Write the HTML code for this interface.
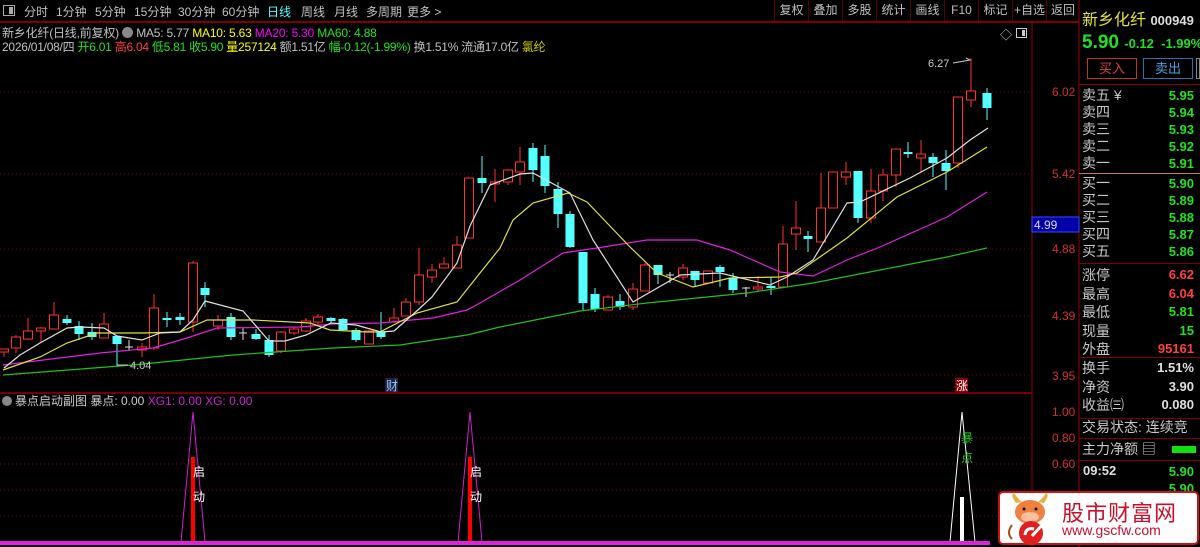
<!DOCTYPE html>
<html><head><meta charset="utf-8"><style>
*{margin:0;padding:0;box-sizing:border-box}
body{width:1200px;height:547px;background:#000;overflow:hidden;position:relative;font-family:"Liberation Sans","Noto Sans CJK SC",sans-serif;color:#c0c0c0}
.a{position:absolute;white-space:nowrap}
.tb{font-size:12px;top:3px;color:#c0c0c0;position:absolute;white-space:nowrap}
.rb{position:absolute;top:0;height:21px;font-size:12px;line-height:21px;text-align:center;color:#c0c0c0;border-left:1px solid #500}
.rp{position:absolute;left:1082px;font-size:14px;color:#c8c8c8;line-height:17px}
.rv{position:absolute;right:6px;font-size:13px;font-weight:bold;line-height:17px;text-align:right}
.g{color:#22e022}.r{color:#ff4040}.w{color:#e0e0e0}
.hl{position:absolute;left:1079px;width:121px;height:1px;background:#800000}
</style></head><body>
<!-- toolbar -->
<div class="a" style="left:3px;top:5px;width:12px;height:11px;border:1px solid #aaa"></div>
<div class="a" style="left:9px;top:7px;width:4px;height:7px;background:#aaa"></div>
<div class="tb" style="left:24px">分时</div>
<div class="tb" style="left:56px">1分钟</div>
<div class="tb" style="left:95px">5分钟</div>
<div class="tb" style="left:134px">15分钟</div>
<div class="tb" style="left:178px">30分钟</div>
<div class="tb" style="left:222px">60分钟</div>
<div class="tb" style="left:267px;color:#5ff">日线</div>
<div class="tb" style="left:301px">周线</div>
<div class="tb" style="left:334px">月线</div>
<div class="tb" style="left:366px">多周期</div>
<div class="tb" style="left:407px">更多 &gt;</div>
<div class="rb" style="left:774px;width:34px">复权</div>
<div class="rb" style="left:808px;width:34px">叠加</div>
<div class="rb" style="left:842px;width:34px">多股</div>
<div class="rb" style="left:876px;width:34px">统计</div>
<div class="rb" style="left:910px;width:34px">画线</div>
<div class="rb" style="left:944px;width:34px">F10</div>
<div class="rb" style="left:978px;width:34px">标记</div>
<div class="rb" style="left:1012px;width:34px">+自选</div>
<div class="rb" style="left:1046px;width:33px">返回</div>
<div class="a" style="left:0;top:21px;width:1079px;height:2px;background:#800000"></div>
<!-- info lines -->
<div class="a" style="left:2px;top:24px;font-size:12px;letter-spacing:-0.2px">新乡化纤(日线,前复权) <span style="display:inline-block;width:11px;height:11px;border-radius:6px;background:#888;vertical-align:-1px"></span> MA5: 5.77 <span style="color:#ff0">MA10: 5.63</span> <span style="color:#f0f">MA20: 5.30</span> <span class="g">MA60: 4.88</span></div>
<div class="a" style="left:2px;top:38px;font-size:12px;letter-spacing:-0.25px">2026/01/08/四 <span class="g">开6.01</span> <span class="r">高6.04</span> <span class="g">低5.81</span> <span class="g">收5.90</span> <span style="color:#ff0">量257124</span> 额1.51亿 <span class="g">幅-0.12(-1.99%)</span> 换1.51% 流通17.0亿 <span style="color:#cc0">氯纶</span></div>
<div class="a" style="left:1000px;top:26px;font-size:12px;color:#ccc">◇</div>
<div class="a" style="left:1016px;top:28px;width:11px;height:10px;border:1px solid #ccc"></div>
<div class="a" style="left:1022px;top:30px;width:3px;height:6px;background:#ccc"></div>

<svg class="a" style="left:0;top:0" width="1080" height="547" id="ch">
<g stroke="#800000" stroke-dasharray="1,3">
<line x1="0" y1="92" x2="1030" y2="92"/><line x1="0" y1="174" x2="1030" y2="174"/><line x1="0" y1="249" x2="1030" y2="249"/><line x1="0" y1="316" x2="1030" y2="316"/><line x1="0" y1="375" x2="1030" y2="375"/>
<line x1="0" y1="438" x2="1030" y2="438"/><line x1="0" y1="464" x2="1030" y2="464"/><line x1="0" y1="490" x2="1030" y2="490"/><line x1="0" y1="516" x2="1030" y2="516"/>
</g>
<line x1="0" y1="393" x2="1032" y2="393" stroke="#900" stroke-width="1.5"/>
<line x1="1032" y1="21" x2="1032" y2="547" stroke="#900"/>
<line x1="1079" y1="0" x2="1079" y2="547" stroke="#900"/>
<g fill="#d03030" font-size="12" font-family="Liberation Sans">
<text x="1052" y="96">6.02</text><text x="1052" y="178">5.42</text><text x="1052" y="253">4.88</text><text x="1052" y="320">4.39</text><text x="1052" y="380">3.95</text>
<text x="1052" y="416">1.00</text><text x="1052" y="442">0.80</text><text x="1052" y="468">0.60</text>
</g>
<rect x="1032" y="217" width="47" height="15" fill="#0000a8" stroke="#44f"/>
<text x="1034" y="229" fill="#ddd" font-size="12" font-family="Liberation Sans">4.99</text>
<g id="cd"></g>
<g fill="none" stroke-width="1.2">
<polyline stroke="#20c020" points="3,375 133,365 233,355 333,348 400,345 467,335 500,327 580,311 647,303 747,293 813,283 880,270 947,257 987,248"/>
<polyline stroke="#e020e0" points="3,365 100,353 153,348 187,338 217,328 300,327 333,324 380,323 433,318 467,310 480,303 520,280 563,253 597,248 647,240 697,240 730,250 780,272 813,276 847,260 880,247 947,217 987,192"/>
<polyline stroke="#e0e040" points="3,370 40,357 67,343 97,333 143,333 180,332 207,320 253,320 310,323 330,330 367,332 380,332 417,313 457,302 480,273 500,248 513,220 533,203 568,193 587,202 630,247 657,273 693,287 730,278 780,277 797,273 847,238 897,197 947,172 987,147"/>
<polyline stroke="#e0e0e0" points="4,368 20,355 40,343 67,328 80,327 104,328 117,336 142,340 160,333 180,332 193,320 205,301 243,311 269,341 285,341 306,335 331,323 356,325 381,332 394,331 419,309 432,297 457,263 470,226 490,185 520,174 533,173 570,193 593,240 633,302 680,275 720,273 770,285 787,277 813,260 847,203 860,202 910,178 947,158 970,140 988,128"/>
</g>
<line x1="117" y1="365" x2="128" y2="365" stroke="#ccc"/><text x="130" y="369" fill="#ccc" font-size="11" font-family="Liberation Sans">4.04</text>
<text x="928" y="67" fill="#ccc" font-size="11" font-family="Liberation Sans">6.27</text>
<polyline points="953,63 970,60 966,58" fill="none" stroke="#ccc"/>
<rect x="385" y="378" width="13" height="14" fill="#224"/><text x="386" y="390" fill="#8cf" font-size="12">财</text>
<rect x="955" y="378" width="13" height="14" fill="#800"/><text x="956" y="390" fill="#fff" font-size="12">涨</text>
<!-- sub chart -->
<polygon points="181,542 193,412 205,542" fill="none" stroke="#d020d0"/>
<polygon points="458,542 470,412 482,542" fill="none" stroke="#d020d0"/>
<polygon points="950,542 962,412 975,542" fill="none" stroke="#fff"/>
<rect x="191" y="457" width="4" height="85" fill="#f00"/>
<rect x="468" y="457" width="4" height="85" fill="#f00"/>
<rect x="960" y="497" width="4" height="45" fill="#fff"/>
<g font-size="12" fill="#fff"><text x="193" y="476">启</text><text x="193" y="501">动</text><text x="470" y="476">启</text><text x="470" y="501">动</text></g>
<g font-size="12" fill="#20c020"><text x="961" y="442">暴</text><text x="961" y="462">点</text></g>
<rect x="0" y="541" width="990" height="4" fill="#e020e0"/>
<circle cx="7" cy="401" r="5" fill="#888"/>
<text x="15" y="405" font-size="12" fill="#ccc">暴点启动副图 暴点: 0.00 <tspan fill="#d020d0">XG1: 0.00 XG: 0.00</tspan></text>
</svg>

<!-- right panel -->
<div class="a" style="left:1082px;top:6px;font-size:16px;color:#e0e040">新乡化纤 <span style="font-size:13px;color:#ddd;font-weight:bold">000949</span></div>
<div class="a" style="left:1082px;top:32px;font-size:19px;font-weight:bold;color:#22e022">5.90 <span style="font-size:13px">-0.12&nbsp;&nbsp;-1.99%</span></div>
<div class="a" style="left:1087px;top:58px;width:50px;height:21px;border:1px solid #c03030;color:#e04040;font-size:13px;text-align:center;line-height:19px">买入</div>
<div class="a" style="left:1143px;top:58px;width:50px;height:21px;border:1px solid #3070b0;color:#50a0e0;font-size:13px;text-align:center;line-height:19px">卖出</div>
<div class="a" style="left:1196px;top:58px;width:4px;height:21px;border:1px solid #888"></div>
<div class="hl" style="top:84px"></div>
<div class="rp" style="top:87px">卖五 ¥<br>卖四<br>卖三<br>卖二<br>卖一</div>
<div class="rv g" style="top:87px">5.95<br>5.94<br>5.93<br>5.92<br>5.91</div>
<div class="hl" style="top:173px;background:#c08040"></div>
<div class="rp" style="top:175px">买一<br>买二<br>买三<br>买四<br>买五</div>
<div class="rv g" style="top:175px">5.90<br>5.89<br>5.88<br>5.87<br>5.86</div>
<div class="hl" style="top:263px"></div>
<div class="rp" style="top:266px;line-height:18.5px">涨停<br>最高<br>最低<br>现量<br>外盘</div>
<div class="rv" style="top:266px;line-height:18.5px"><span class="r">6.62</span><br><span class="r">6.04</span><br><span class="g">5.81</span><br><span class="g">15</span><br><span class="r">95161</span></div>
<div class="hl" style="top:357px"></div>
<div class="rp" style="top:359px;line-height:18.5px">换手<br>净资<br>收益㈢</div>
<div class="rv w" style="top:359px;line-height:18.5px">1.51%<br>3.90<br>0.080</div>
<div class="hl" style="top:418px"></div>
<div class="rp" style="top:419px">交易状态: 连续竞</div>
<div class="hl" style="top:438px"></div>
<div class="rp" style="top:441px">主力净额 ▤</div>
<div class="a" style="left:1172px;top:446px;width:24px;height:7px;background:#10e010"></div>
<div class="hl" style="top:460px"></div>
<div class="a w" style="left:1083px;top:463px;font-size:13px;font-weight:bold">09:52</div>
<div class="rv g" style="top:463px">5.90</div>
<div class="rv g" style="top:480px">5.90</div>
<!-- logo -->
<div class="a" style="left:998px;top:491px;width:201px;height:54px;background:#fff;border:2px solid #d01010;border-radius:5px"></div>
<svg class="a" style="left:1004px;top:493px" width="55" height="52">
<path d="M12 10 Q6 2 10 0 Q14 6 18 9 Z M40 10 Q46 2 42 0 Q38 6 34 9 Z" fill="#e8b040"/>
<ellipse cx="26" cy="19" rx="15" ry="12" fill="#f08040"/>
<ellipse cx="26" cy="24" rx="9" ry="5" fill="#ffc0a0"/>
<circle cx="20" cy="16" r="1.5" fill="#000"/><circle cx="32" cy="16" r="1.5" fill="#000"/>
<circle cx="27" cy="40" r="12" fill="#e02020"/>
<path d="M21 42 Q22 34 30 36 M28 43 L40 30" stroke="#fff" stroke-width="3" fill="none"/>
<path d="M8 32 Q2 40 8 46" stroke="#a05020" stroke-width="2" fill="none"/>
</svg>
<div class="a" style="left:1062px;top:496px;font-size:22px;color:#c8102e;letter-spacing:1px">股市财富网</div>
<div class="a" style="left:1062px;top:522px;font-size:14px;color:#c8102e">www.gscfw.com</div>

<script>
var d=[[4,'r',349,352,349,357],[16,'r',337,348,335,353],[28,'r',331,339,318,340],[41,'r',328,331,327,342],[54,'r',315,329,302,329],[67,'c',319,323,315,325],[79,'c',326,334,321,340],[92,'c',332,337,323,340],[104,'r',324,338,313,338],[117,'c',336,344,336,366],[129,'x',347,347,340,351],[142,'r',347,350,343,357],[154,'r',308,348,294,350],[167,'c',318,320,312,327],[180,'c',317,320,313,325],[193,'r',263,322,261,332],[205,'c',288,295,282,307],[218,'r',320,326,315,330],[231,'c',317,337,313,340],[243,'x',333,333,328,340],[256,'c',334,339,329,340],[269,'c',340,355,335,357],[281,'r',332,351,331,353],[294,'r',329,333,327,335],[306,'r',321,331,318,332],[318,'r',317,322,314,325],[331,'c',318,321,317,323],[343,'c',319,330,318,331],[356,'c',330,340,328,342],[369,'r',331,344,330,344],[381,'c',332,337,312,339],[394,'r',318,322,308,323],[406,'r',302,316,298,316],[419,'r',275,302,248,305],[432,'r',270,277,264,283],[444,'r',264,268,257,268],[457,'r',245,268,236,268],[469,'r',178,238,178,238],[482,'c',178,183,156,193],[495,'r',182,184,169,202],[508,'r',170,182,169,185],[520,'r',162,172,147,185],[533,'c',148,170,143,182],[545,'c',156,186,145,193],[558,'c',189,214,182,228],[570,'c',214,247,211,248],[583,'c',252,303,252,310],[595,'c',294,309,288,312],[608,'r',297,310,295,310],[620,'c',301,307,294,310],[633,'r',289,307,283,310],[645,'r',265,291,263,291],[658,'c',265,275,265,284],[670,'x',275,275,272,283],[683,'r',268,277,264,280],[695,'c',271,280,271,287],[708,'r',271,283,271,283],[720,'c',267,272,265,287],[733,'c',278,290,273,293],[746,'x',288,288,287,297],[758,'r',287,289,276,292],[771,'c',286,288,277,295],[783,'r',244,287,226,287],[796,'r',228,234,201,250],[808,'c',236,239,231,252],[821,'r',208,242,173,242],[833,'r',172,208,172,208],[846,'r',172,177,162,185],[858,'c',171,218,171,223],[871,'r',191,218,169,223],[883,'r',175,191,169,201],[896,'r',149,175,149,187],[908,'c',152,154,142,158],[921,'r',154,158,140,172],[933,'c',157,163,153,177],[946,'c',163,171,150,190],[958,'r',97,163,97,168],[971,'r',91,100,58,107],[987,'c',93,108,88,120]];
var s='';
d.forEach(function(c){var x=c[0],t=c[1],col=t=='r'?'#ff3030':t=='c'?'#54ffff':'#e0e0e0';
s+='<line x1="'+x+'" y1="'+c[4]+'" x2="'+x+'" y2="'+c[5]+'" stroke="'+col+'"/>';
if(t=='x')s+='<line x1="'+(x-4)+'" y1="'+c[2]+'" x2="'+(x+4)+'" y2="'+c[2]+'" stroke="'+col+'"/>';
else if(t=='r')s+='<rect x="'+(x-4.5)+'" y="'+c[2]+'" width="9" height="'+Math.max(1,c[3]-c[2])+'" fill="#000" stroke="'+col+'"/>';
else s+='<rect x="'+(x-4.5)+'" y="'+c[2]+'" width="9" height="'+Math.max(2,c[3]-c[2])+'" fill="'+col+'"/>';});
document.getElementById('cd').innerHTML=s;
</script>
</body></html>
